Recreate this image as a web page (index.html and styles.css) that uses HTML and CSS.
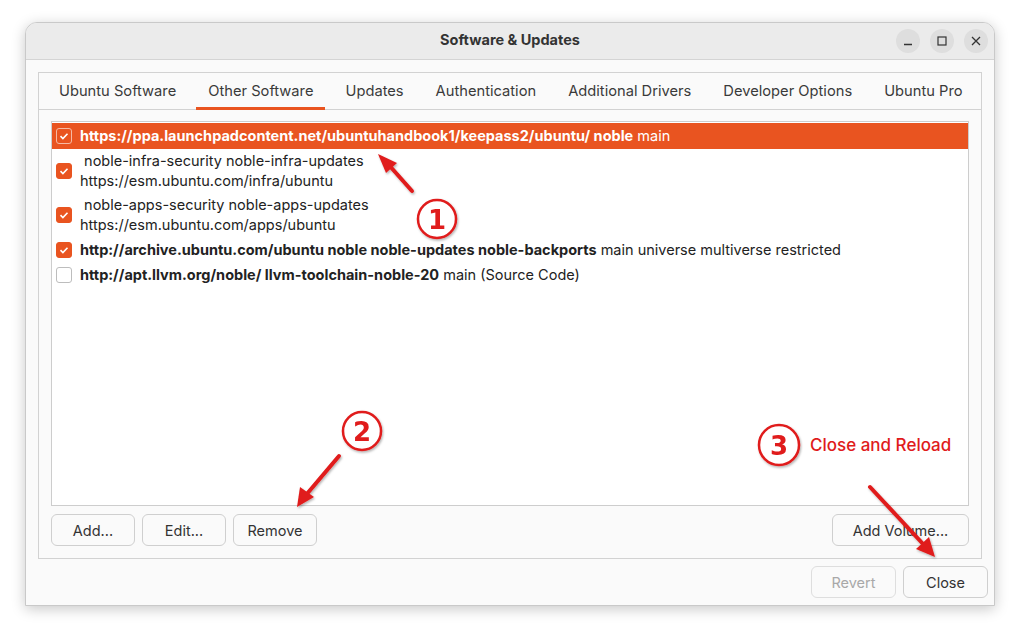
FILE: index.html
```html
<!DOCTYPE html>
<html lang="en">
<head>
    <meta charset="UTF-8">
    <title>Software &amp; Updates</title>
    <link rel="stylesheet" href="styles.css">
</head>
<body>
<div class="window">
    <div class="titlebar">
        <div class="title">Software &amp; Updates</div>
        <div class="controls">
            <div class="ctl">
                <svg width="10" height="10" viewBox="0 0 10 10"><path d="M1 8.5h8" stroke="#333" stroke-width="1.3"/></svg>
            </div>
            <div class="ctl">
                <svg width="10" height="10" viewBox="0 0 10 10"><rect x="1" y="1" width="8" height="8" fill="none" stroke="#333" stroke-width="1.2"/></svg>
            </div>
            <div class="ctl">
                <svg width="10" height="10" viewBox="0 0 10 10"><path d="M1 1L9 9M9 1L1 9" stroke="#333" stroke-width="1.3"/></svg>
            </div>
        </div>
    </div>

    <div class="content">
        <div class="notebook">
            <div class="tabs">
                <div class="tab">Ubuntu Software</div>
                <div class="tab active">Other Software</div>
                <div class="tab">Updates</div>
                <div class="tab">Authentication</div>
                <div class="tab">Additional Drivers</div>
                <div class="tab">Developer Options</div>
                <div class="tab">Ubuntu Pro</div>
            </div>

            <div class="page">
                <div class="list">
                    <div class="row selected">
                        <span class="check on"><svg width="16" height="16" viewBox="0 0 16 16"><path d="M4.5 8.2l2.4 2.3 4.6-4.8" fill="none" stroke="#fff" stroke-width="1.6"/></svg></span>
                        <div class="text"><b>https://ppa.launchpadcontent.net/ubuntuhandbook1/keepass2/ubuntu/ noble</b> main</div>
                    </div>
                    <div class="row">
                        <span class="check on"><svg width="16" height="16" viewBox="0 0 16 16"><path d="M4.5 8.2l2.4 2.3 4.6-4.8" fill="none" stroke="#fff" stroke-width="1.6"/></svg></span>
                        <div class="text">
                            <div class="pre"> noble-infra-security noble-infra-updates</div>
                            <div>https://esm.ubuntu.com/infra/ubuntu</div>
                        </div>
                    </div>
                    <div class="row">
                        <span class="check on"><svg width="16" height="16" viewBox="0 0 16 16"><path d="M4.5 8.2l2.4 2.3 4.6-4.8" fill="none" stroke="#fff" stroke-width="1.6"/></svg></span>
                        <div class="text">
                            <div class="pre"> noble-apps-security noble-apps-updates</div>
                            <div>https://esm.ubuntu.com/apps/ubuntu</div>
                        </div>
                    </div>
                    <div class="row">
                        <span class="check on"><svg width="16" height="16" viewBox="0 0 16 16"><path d="M4.5 8.2l2.4 2.3 4.6-4.8" fill="none" stroke="#fff" stroke-width="1.6"/></svg></span>
                        <div class="text"><b>http://archive.ubuntu.com/ubuntu noble noble-updates noble-backports</b> main universe multiverse restricted</div>
                    </div>
                    <div class="row">
                        <span class="check"></span>
                        <div class="text"><b>http://apt.llvm.org/noble/ llvm-toolchain-noble-20</b> main (Source Code)</div>
                    </div>
                </div>

                <div class="list-buttons">
                    <button class="btn">Add...</button>
                    <button class="btn">Edit...</button>
                    <button class="btn">Remove</button>
                    <div class="spacer"></div>
                    <button class="btn wide">Add Volume...</button>
                </div>
            </div>
        </div>

        <div class="actions">
            <button class="btn disabled">Revert</button>
            <button class="btn">Close</button>
        </div>
    </div>
</div>

<!-- screenshot annotations -->
<svg class="notes" width="1021" height="635" viewBox="0 0 1021 635">
    <defs>
        <filter id="shade" x="-20%" y="-20%" width="140%" height="140%">
            <feDropShadow dx="1" dy="1.5" stdDeviation="1.2" flood-color="#000" flood-opacity="0.3"/>
        </filter>
    </defs>
    <g filter="url(#shade)">
        <circle cx="437" cy="219" r="19" fill="#fff" stroke="#e01b1b" stroke-width="2.5"/>
        <text x="437" y="229" class="num">1</text>
        <path d="M412 191L388 164" stroke="#e01b1b" stroke-width="4" stroke-linecap="round"/>
        <path d="M378 154L397 163L386 173Z" fill="#e01b1b"/>

        <circle cx="362" cy="431" r="19" fill="#fff" stroke="#e01b1b" stroke-width="2.5"/>
        <text x="362" y="441" class="num">2</text>
        <path d="M339 456L306 495" stroke="#e01b1b" stroke-width="4" stroke-linecap="round"/>
        <path d="M297 507L300 487L314 497Z" fill="#e01b1b"/>

        <circle cx="779" cy="445" r="20" fill="#fff" stroke="#e01b1b" stroke-width="2.5"/>
        <text x="779" y="455" class="num">3</text>
        <path d="M870 487L924 545" stroke="#e01b1b" stroke-width="4" stroke-linecap="round"/>
        <path d="M935 557L916 549L929 537Z" fill="#e01b1b"/>
    </g>
    <text x="810" y="451" class="label">Close and Reload</text>
</svg>
</body>
</html>
```

FILE: styles.css
```css
body {
    margin: 0;
    padding: 22px 0 0 25px;
    background: #fff;
    font-family: Inter, "Noto Sans", sans-serif;
    color: #222;
    width: 1021px;
    height: 635px;
    box-sizing: border-box;
    overflow: hidden;
}

.window {
    width: 970px;
    height: 584px;
    box-sizing: border-box;
    display: flex;
    flex-direction: column;
    background: #fafafa;
    border: 1px solid #c9c9c9;
    border-radius: 12px 12px 0 0;
    box-shadow: 0 3px 14px rgba(0, 0, 0, 0.22);
    overflow: hidden;
}

.titlebar {
    height: 37px;
    box-sizing: border-box;
    flex-shrink: 0;
    display: flex;
    align-items: center;
    justify-content: center;
    position: relative;
    background: #ebebeb;
    border-bottom: 1px solid #d4d4d4;
}

.title {
    font-size: 14.5px;
    font-weight: 700;
    color: #333;
    margin-top: -3px;
}

.controls {
    position: absolute;
    right: 6px;
    top: 6px;
    display: flex;
    gap: 10px;
}

.ctl {
    width: 24px;
    height: 24px;
    border-radius: 50%;
    background: #dedede;
    display: flex;
    align-items: center;
    justify-content: center;
}

.content {
    flex: 1;
    display: flex;
    flex-direction: column;
    padding: 12px 12px 7px 12px;
}

.notebook {
    height: 487px;
    box-sizing: border-box;
    display: flex;
    flex-direction: column;
    border: 1px solid #d2d2d2;
}

.tabs {
    height: 36px;
    flex-shrink: 0;
    display: flex;
    gap: 8px;
    padding: 0 8px;
    border-bottom: 1px solid #d2d2d2;
}

.tab {
    flex-shrink: 0;
    white-space: nowrap;
    padding: 0 12px;
    font-size: 14.7px;
    color: #3a3a3a;
    display: flex;
    align-items: center;
    box-sizing: border-box;
    border-bottom: 3px solid transparent;
    padding-top: 1px;
    margin-bottom: -1px;
}

.tab.active {
    border-bottom-color: #e95420;
}

.page {
    flex: 1;
    display: flex;
    flex-direction: column;
    padding: 11px 12px 12px 12px;
}

.list {
    flex: 1;
    background: #fff;
    border: 1px solid #cdcdcd;
    padding-top: 1px;
}

.row {
    display: flex;
    align-items: center;
    gap: 8px;
    min-height: 25px;
    box-sizing: border-box;
    padding: 2px 4px;
    font-size: 14.5px;
}

.row .text {
    line-height: 20px;
}

.row.selected {
    min-height: 26px;
    background: #e95420;
    color: #fff;
}

.pre {
    white-space: pre;
}

.check {
    width: 16px;
    height: 16px;
    flex-shrink: 0;
    box-sizing: border-box;
    border-radius: 3px;
    border: 1px solid #bdbdbd;
    background: #fff;
    display: flex;
    align-items: center;
    justify-content: center;
}

.check svg {
    display: block;
    flex-shrink: 0;
}

.check.on {
    background: #e95420;
    border-color: #e95420;
}

.selected .check.on {
    border-color: #f6b9a3;
}

.list-buttons {
    display: flex;
    gap: 7px;
    margin-top: 8px;
}

.spacer {
    flex: 1;
}

.btn {
    width: 84px;
    height: 32px;
    box-sizing: border-box;
    border: 1px solid #cfcfcf;
    border-radius: 6px;
    background: #fafafa;
    font-family: Inter, "Noto Sans", sans-serif;
    font-size: 14.5px;
    color: #333;
}

.btn.wide {
    width: 137px;
}

.btn.disabled {
    color: #a8a8a8;
    border-color: #dedede;
}

.actions {
    display: flex;
    justify-content: flex-end;
    gap: 7px;
    margin-top: 7px;
    margin-right: -6px;
}

.actions .btn {
    width: 85px;
}

.notes {
    position: absolute;
    left: 0;
    top: 0;
    pointer-events: none;
}

.num {
    font-family: "DejaVu Sans", sans-serif;
    font-size: 26px;
    font-weight: 700;
    fill: #e01b1b;
    text-anchor: middle;
}

.label {
    font-family: Inter, sans-serif;
    font-size: 17px;
    font-weight: 500;
    fill: #e01b1b;
}
```
